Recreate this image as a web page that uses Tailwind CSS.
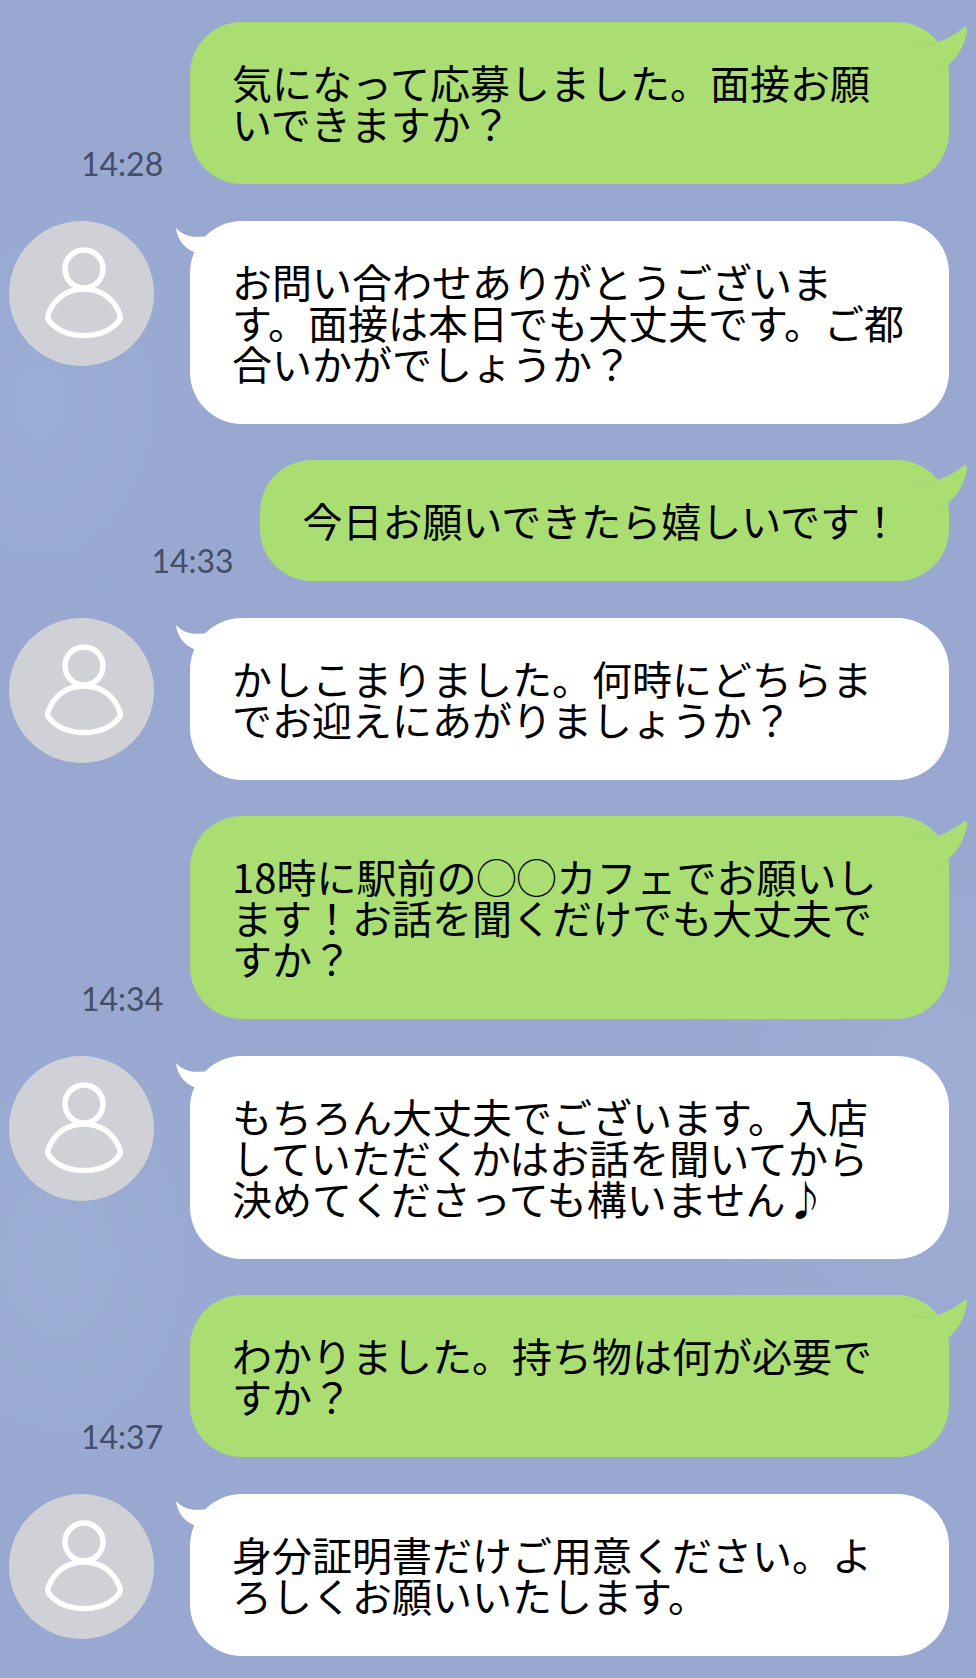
<!DOCTYPE html>
<html lang="ja">
<head>
<meta charset="utf-8">
<meta name="viewport" content="width=device-width, initial-scale=1">
<title>トーク</title>
<script src="https://cdn.jsdelivr.net/npm/@tailwindcss/browser@4"></script>
</head>
<body class="min-h-screen bg-[#98a8d0] bg-[radial-gradient(ellipse_at_4%_24%,#9cadd5_0%,transparent_14%),radial-gradient(ellipse_at_6%_75%,#9daed5_0%,transparent_14%),radial-gradient(ellipse_at_96%_66%,#9eadd3_0%,transparent_20%)] font-['Noto_Sans_CJK_JP',sans-serif] text-[40px] leading-[41px] text-black">
<svg class="hidden" aria-hidden="true">
  <symbol id="person" viewBox="0 0 145 145">
    <g fill="none" stroke="#fff" stroke-width="5.5" stroke-linejoin="round">
      <circle cx="75" cy="48" r="19"/>
      <path d="M39 94C44 79 57 68 75 68s31 11 36 26c1 3 0 5-2 7-8 9-19 13.500-34 13.500S49 110 41 101c-2-2-3-4-2-7Z"/>
    </g>
  </symbol>
  <symbol id="tail-left" viewBox="0 0 50 50">
    <path fill="#fff" d="M1 7C6 12 12 16 22 15.800L31 15.500 45 10V45L19 31C10 28 2 18 1 7Z"/>
  </symbol>
  <symbol id="tail-right" viewBox="0 0 60 60">
    <path fill="#aade73" d="M10 20H29C37 17 46 13 56 4.500Q58.500 5 58 9C55 24 50 34 39 43L20 50Z"/>
    <path fill="none" stroke="#a2d578" d="M4 20C11 23 20 23 28 20M27 51Q33 49 38 44"/>
  </symbol>
</svg>
<main class="flex flex-col pt-[22px] pb-[21px]">
  <article class="mb-[37px] flex items-end justify-end pr-[27px] pl-[81px]">
    <time class="mb-px w-[109px] shrink-0 font-[Lato,sans-serif] text-[32px] leading-[38px] text-[#434e68]">14:28</time>
    <div class="relative flex-1 rounded-[52px] bg-[#aade73] px-[42px] py-10">
      <svg class="absolute top-0 -right-5 size-[60px]" aria-hidden="true"><use href="#tail-right"/></svg>
      <p class="whitespace-nowrap">気になって応募しました。面接お願<br>いできますか？</p>
    </div>
  </article>
  <article class="mb-9 flex items-start gap-9 pr-[27px] pl-[9px]">
    <svg class="size-[145px] shrink-0 rounded-full bg-[#d0d1d6]" role="img" aria-label="相手"><use href="#person"/></svg>
    <div class="relative flex-1 rounded-[52px] bg-white px-[42px] py-10">
      <svg class="absolute top-0 -left-[15px] size-[50px]" aria-hidden="true"><use href="#tail-left"/></svg>
      <p class="whitespace-nowrap">お問い合わせありがとうございま<br>す。面接は本日でも大丈夫です。ご都<br>合いかがでしょうか？</p>
    </div>
  </article>
  <article class="mb-[37px] flex items-end justify-end pr-[27px] pl-[81px]">
    <time class="mb-px w-[109px] shrink-0 font-[Lato,sans-serif] text-[32px] leading-[38px] text-[#434e68]">14:33</time>
    <div class="relative rounded-[52px] bg-[#aade73] py-10 pr-[49px] pl-[42px]">
      <svg class="absolute top-0 -right-5 size-[60px]" aria-hidden="true"><use href="#tail-right"/></svg>
      <p class="whitespace-nowrap">今日お願いできたら嬉しいです！</p>
    </div>
  </article>
  <article class="mb-9 flex items-start gap-9 pr-[27px] pl-[9px]">
    <svg class="size-[145px] shrink-0 rounded-full bg-[#d0d1d6]" role="img" aria-label="相手"><use href="#person"/></svg>
    <div class="relative flex-1 rounded-[52px] bg-white px-[42px] py-10">
      <svg class="absolute top-0 -left-[15px] size-[50px]" aria-hidden="true"><use href="#tail-left"/></svg>
      <p class="whitespace-nowrap">かしこまりました。何時にどちらま<br>でお迎えにあがりましょうか？</p>
    </div>
  </article>
  <article class="mb-[37px] flex items-end justify-end pr-[27px] pl-[81px]">
    <time class="mb-px w-[109px] shrink-0 font-[Lato,sans-serif] text-[32px] leading-[38px] text-[#434e68]">14:34</time>
    <div class="relative flex-1 rounded-[52px] bg-[#aade73] px-[42px] py-10">
      <svg class="absolute top-0 -right-5 size-[60px]" aria-hidden="true"><use href="#tail-right"/></svg>
      <p class="whitespace-nowrap">18時に駅前の◯◯カフェでお願いし<br>ます！お話を聞くだけでも大丈夫で<br>すか？</p>
    </div>
  </article>
  <article class="mb-9 flex items-start gap-9 pr-[27px] pl-[9px]">
    <svg class="size-[145px] shrink-0 rounded-full bg-[#d0d1d6]" role="img" aria-label="相手"><use href="#person"/></svg>
    <div class="relative flex-1 rounded-[52px] bg-white px-[42px] py-10">
      <svg class="absolute top-0 -left-[15px] size-[50px]" aria-hidden="true"><use href="#tail-left"/></svg>
      <p class="whitespace-nowrap">もちろん大丈夫でございます。入店<br>していただくかはお話を聞いてから<br>決めてくださっても構いません♪</p>
    </div>
  </article>
  <article class="mb-[37px] flex items-end justify-end pr-[27px] pl-[81px]">
    <time class="mb-px w-[109px] shrink-0 font-[Lato,sans-serif] text-[32px] leading-[38px] text-[#434e68]">14:37</time>
    <div class="relative flex-1 rounded-[52px] bg-[#aade73] px-[42px] py-10">
      <svg class="absolute top-0 -right-5 size-[60px]" aria-hidden="true"><use href="#tail-right"/></svg>
      <p class="whitespace-nowrap">わかりました。持ち物は何が必要で<br>すか？</p>
    </div>
  </article>
  <article class="flex items-start gap-9 pr-[27px] pl-[9px]">
    <svg class="size-[145px] shrink-0 rounded-full bg-[#d0d1d6]" role="img" aria-label="相手"><use href="#person"/></svg>
    <div class="relative flex-1 rounded-[52px] bg-white px-[42px] py-10">
      <svg class="absolute top-0 -left-[15px] size-[50px]" aria-hidden="true"><use href="#tail-left"/></svg>
      <p class="whitespace-nowrap">身分証明書だけご用意ください。よ<br>ろしくお願いいたします。</p>
    </div>
  </article>
</main>
</body>
</html>
